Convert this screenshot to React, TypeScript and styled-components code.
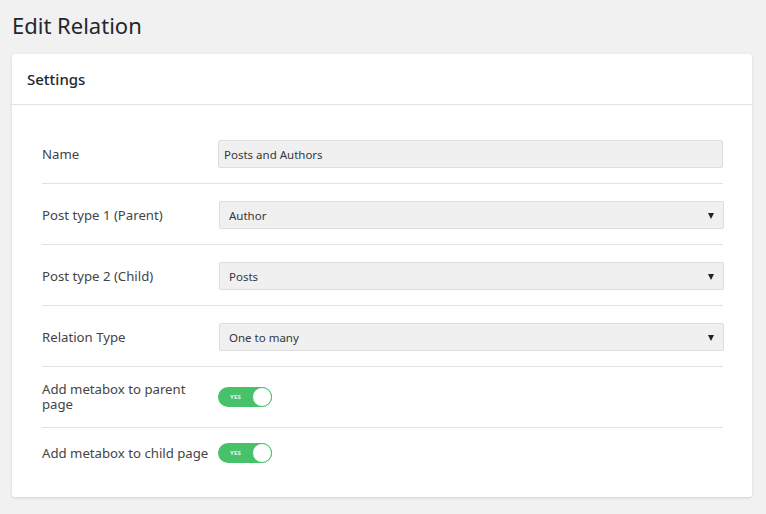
import React from 'react';
import styled, { createGlobalStyle } from 'styled-components';

const GlobalStyle = createGlobalStyle`
    html, body {
        margin: 0;
        padding: 0;
        background: #f1f1f1;
        font-family: "Noto Sans", "Open Sans", sans-serif;
    }
`;

const Page = styled.div`
    padding: 9px 14px 16px 12px;
    width: 766px;
    box-sizing: border-box;
`;

const PageTitle = styled.h1`
    margin: 0 0 13px;
    font-size: 22px;
    font-weight: 400;
    line-height: 32px;
    color: #23282d;
`;

const Card = styled.section`
    background: #fff;
    border-radius: 3px;
    box-shadow: 0 1px 3px rgba(0, 0, 0, 0.12);
`;

const CardHeader = styled.header`
    padding: 0 15px;
    height: 50px;
    display: flex;
    align-items: center;
    border-bottom: 1px solid #e2e2e2;
`;

const CardTitle = styled.h2`
    margin: 0;
    font-size: 15px;
    font-weight: 500;
    color: #23282d;
`;

const CardBody = styled.div`
    padding: 18px 29px 19px 30px;
`;

const Row = styled.div<{ last?: boolean }>`
    display: grid;
    grid-template-columns: 176px 1fr;
    align-items: center;
    padding: 15px 0;
    border-bottom: ${p => (p.last ? 'none' : '1px solid #e2e2e2')};
`;

const Label = styled.label`
    font-size: 13.2px;
    line-height: 15px;
    color: #444;
    padding-right: 4px;
`;

/* labels beside an input or select sit a touch lower, in line with the box */
const FieldLabel = styled(Label)`
    padding-top: 3px;
`;

const Field = styled.div`
    padding-top: 2px;
`;

const TextInput = styled.input`
    display: block;
    height: 28px;
    box-sizing: border-box;
    border: 1px solid #ddd;
    border-radius: 2px;
    background: #f0f0f0;
    padding: 0 5px;
    font-family: inherit;
    font-size: 11.5px;
    color: #32373c;
    width: 100%;
    outline: none;
`;

const SelectBox = styled.div`
    position: relative;
    height: 28px;
    box-sizing: border-box;
    border: 1px solid #ddd;
    border-radius: 2px;
    background: #f0f0f0;
    margin-left: 1px;
    margin-right: -1px;
    display: flex;
    align-items: center;
    padding: 0 9px;
    font-size: 11.5px;
    color: #32373c;
`;

const Caret = styled.span`
    position: absolute;
    right: 9px;
    top: 50%;
    margin-top: -2px;
    width: 0;
    height: 0;
    border-left: 3.5px solid transparent;
    border-right: 3.5px solid transparent;
    border-top: 6px solid #222;
`;

const Toggle = styled.div`
    position: relative;
    width: 54px;
    height: 20px;
    border-radius: 10px;
    background: #48c16b;
    display: flex;
    align-items: center;
    padding-left: 12px;
    box-sizing: border-box;
    font-size: 6px;
    font-weight: 700;
    color: #e6f7ea;
    letter-spacing: 0.2px;
`;

const Knob = styled.span`
    position: absolute;
    right: 0;
    top: 0;
    width: 20px;
    height: 20px;
    box-sizing: border-box;
    border-radius: 50%;
    background: #fff;
    border: 1.5px solid #48c16b;
`;

const fields = [
    { label: 'Post type 1 (Parent)', value: 'Author' },
    { label: 'Post type 2 (Child)', value: 'Posts' },
    { label: 'Relation Type', value: 'One to many' },
];

const App = () => (
    <>
        <GlobalStyle />
        <Page>
            <PageTitle>Edit Relation</PageTitle>
            <Card>
                <CardHeader>
                    <CardTitle>Settings</CardTitle>
                </CardHeader>
                <CardBody>
                    <Row>
                        <FieldLabel>Name</FieldLabel>
                        <Field>
                            <TextInput defaultValue="Posts and Authors" />
                        </Field>
                    </Row>
                    {fields.map(f => (
                        <Row key={f.label}>
                            <FieldLabel>{f.label}</FieldLabel>
                            <Field>
                                <SelectBox>
                                    {f.value}
                                    <Caret />
                                </SelectBox>
                            </Field>
                        </Row>
                    ))}
                    <Row>
                        <Label>Add metabox to parent page</Label>
                        <Toggle>
                            YES
                            <Knob />
                        </Toggle>
                    </Row>
                    <Row last>
                        <Label>Add metabox to child page</Label>
                        <Toggle>
                            YES
                            <Knob />
                        </Toggle>
                    </Row>
                </CardBody>
            </Card>
        </Page>
    </>
);

export default App;
